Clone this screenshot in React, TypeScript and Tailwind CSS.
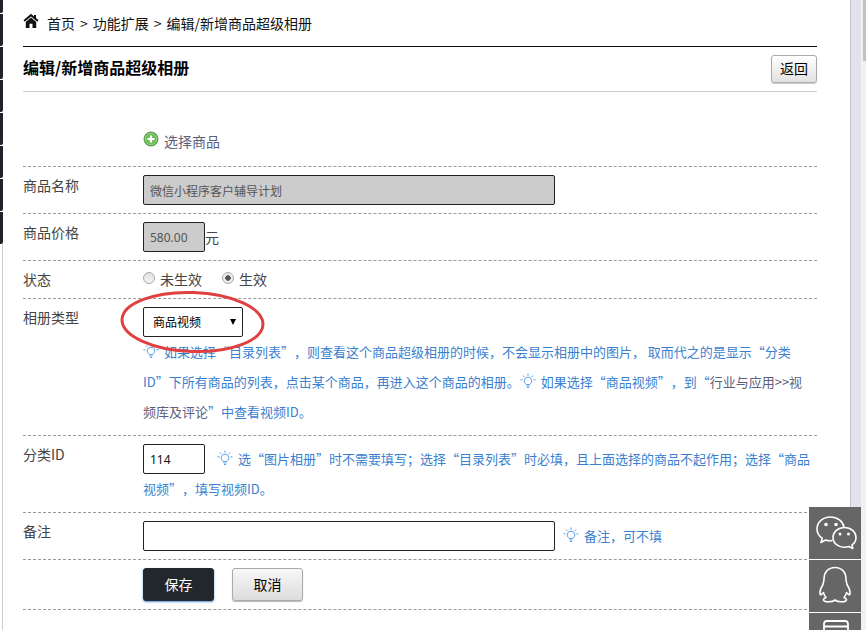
import React from 'react';

const inputClass = 'h-[30px] rounded-[2px] border border-[#222] px-1.5 text-xs';

const Bulb = () => (
  <svg viewBox="0 0 16 16" className="mr-0.5 inline-block w-4 h-4 align-[-2px]" fill="none" stroke="#62a5ea" strokeWidth="1" strokeLinecap="round">
    <path d="M6.300 11.300C5 10.500 4.200 9.400 4.200 8a3.800 3.800 0 0 1 7.600 0c0 1.400-.8 2.500-2.100 3.300" />
    <path d="M6.300 11.500h3.400M6.800 13h2.400M7.300 14.500h1.400" />
    <path d="M8 .8v1.700M3.200 2.800l1 1M12.800 2.800l-1 1M.8 6.800h1.400M13.800 6.800h1.400" />
  </svg>
);

const Home = () => (
  <svg viewBox="0 0 16 16" className="mb-1 w-4 h-4" fill="#111">
    <path d="M8 .8.5 7.300l1.200 1.500L8 3.400l6.300 5.400 1.200-1.500-2.500-2.200V2h-2v1.500z" />
    <path d="M8 4.600 2.800 9V15h3.700V10.700h3V15h3.700V9z" />
  </svg>
);

const AddIcon = () => (
  <svg viewBox="0 0 16 16" className="mb-1 w-4 h-4">
    <circle cx="8" cy="8" r="7" fill="#4fa63d" stroke="#3f8a35" strokeWidth=".8" />
    <circle cx="8" cy="8" r="5.800" fill="#6fbd58" stroke="#a9dc98" strokeWidth=".8" />
    <path d="M8 4.500v7M4.500 8h7" stroke="#fff" strokeWidth="2.200" />
  </svg>
);

type RowProps = {
  label?: React.ReactNode;
  children: React.ReactNode;
};

const Row = ({ label, children }: RowProps) => (
  <div className="flex border-b border-dashed border-[#999] py-2">
    <div className="w-[120px] shrink-0 text-sm leading-5">{label}</div>
    <div className="min-w-0 flex-1">{children}</div>
  </div>
);

const hintClass = 'text-[13px] leading-[30px] text-[#3a7fd0]';

const radioClass =
  'appearance-none mb-1 w-3 h-3 rounded-full border border-[#aaa] bg-gradient-to-b from-[#e0e0e0] to-[#f4f4f4] checked:bg-[radial-gradient(circle,#555_0_2.5px,#eee_3px)]';

const App = () => {
  return (
    <div
      lang="zh-CN"
      className="flex min-h-screen bg-white font-['Noto_Sans_CJK_SC','Noto_Sans',sans-serif] text-[#444] [text-spacing-trim:space-all]"
    >
      <aside className="w-[3px] shrink-0 flex flex-col">
        <div className="h-[13px] rounded-br-[2px] bg-[#22222a]" />
        {[0, 1, 2, 3, 4, 5, 6].map((item) => (
          <div key={item} className="mt-px h-8 rounded-br-[2px] bg-[#22222a]" />
        ))}
        <div className="flex-1 border-r border-[#ccc]" />
      </aside>

      <main className="min-w-0 flex-1 pl-5 pr-[33px]">
        <nav className="flex h-[47px] items-center gap-2 border-b border-[#111] text-sm text-[#111]">
          <Home />
          <ol className="flex gap-[5px]">
            <li><a href="#home">首页</a></li>
            <li>&gt;</li>
            <li><a href="#extend">功能扩展</a></li>
            <li>&gt;</li>
            <li>编辑/新增商品超级相册</li>
          </ol>
        </nav>

        <header className="flex h-[45px] items-center justify-between border-b border-[#ccc]">
          <h1 className="pb-1 text-base font-bold text-black">编辑/新增商品超级相册</h1>
          <button className="h-7 w-[46px] rounded-[3px] border border-[#aaa] bg-gradient-to-b from-white to-[#e2e2e2] pb-0.5 text-sm text-black shadow-[0_1px_1px_#ccc]">
            返回
          </button>
        </header>

        <form>
          <div className="pt-7">
            <Row>
              <a href="#select" className="mb-1 flex h-[26px] items-center gap-[5px] text-sm text-[#5b607c]">
                <AddIcon />
                选择商品
              </a>
            </Row>
          </div>

          <Row label={<label htmlFor="name">商品名称</label>}>
            <input id="name" readOnly defaultValue="微信小程序客户辅导计划" className={`${inputClass} block w-[412px] bg-[#ccc] text-[#555]`} />
          </Row>

          <Row label={<label htmlFor="price">商品价格</label>}>
            <div className="flex items-center text-sm">
              <input id="price" readOnly defaultValue="580.00" className={`${inputClass} w-[62px] bg-[#ccc] font-['Noto_Sans'] text-[#555]`} />
              元
            </div>
          </Row>

          <Row label="状态">
            <div className="flex gap-5 text-sm leading-[21px]">
              <label className="flex items-center gap-[5px]">
                <input type="radio" name="status" className={radioClass} />
                未生效
              </label>
              <label className="flex items-center gap-[5px]">
                <input type="radio" name="status" defaultChecked className={radioClass} />
                生效
              </label>
            </div>
          </Row>

          <Row label={<label htmlFor="type">相册类型</label>}>
            <div className="relative w-[100px]">
              <select id="type" className="block h-[30px] w-full appearance-none rounded-[2px] border border-[#222] bg-white pl-[9px] text-xs text-black">
                <option>商品视频</option>
                <option>图片相册</option>
                <option>目录列表</option>
              </select>
              <svg viewBox="0 0 6 6" className="pointer-events-none absolute right-[7px] top-3 h-1.5 w-1.5">
                <path d="M0 0h6L3 6z" />
              </svg>
              <svg viewBox="0 0 146 66" className="pointer-events-none absolute -left-6 -top-[18px] h-[66px] w-[146px]" fill="none">
                <ellipse cx="73.500" cy="33" rx="70.500" ry="29.500" stroke="#e04040" strokeWidth="3" transform="rotate(2 73 33)" />
              </svg>
            </div>
            <p className={hintClass}>
              <Bulb /> 如果选择“目录列表”，则查看这个商品超级相册的时候，不会显示相册中的图片， 取而代之的是显示“分类
              <br />
              ID”下所有商品的列表，点击某个商品，再进入这个商品的相册。
              <Bulb /> 如果选择“商品视频”，到“
              <a href="#video" className="text-[#5b607c]">行业与应用&gt;&gt;视<br />频库及评论</a>”中查看视频ID。
            </p>
          </Row>

          <Row label={<label htmlFor="category">分类ID</label>}>
            <div className={hintClass}>
              <input id="category" defaultValue="114" className={`${inputClass} mr-3 w-[62px] align-top font-['Noto_Sans'] text-[#111]`} />
              <Bulb /> 选“图片相册”时不需要填写；选择“目录列表”时必填，且上面选择的商品不起作用；选择“商品
              <br />
              视频”，填写视频ID。
            </div>
          </Row>

          <Row label={<label htmlFor="remark">备注</label>}>
            <div className={hintClass}>
              <input id="remark" className={`${inputClass} mr-2 w-[412px] align-top text-[#111]`} />
              <Bulb /> 备注，可不填
            </div>
          </Row>

          <Row>
            <div className="flex gap-[18px] text-sm">
              <button type="button" className="h-[33px] w-[71px] rounded-[3px] border border-[#222930] bg-[#22272c] pb-0.5 text-white shadow-[0_1px_2px_#4a90d0]">
                保存
              </button>
              <button type="button" className="h-[33px] w-[71px] rounded-[3px] border border-[#aaa] bg-gradient-to-b from-[#f8f8f8] to-[#dcdcdc] pb-0.5 text-black shadow-[0_1px_1px_#bbb]">
                取消
              </button>
            </div>
          </Row>
        </form>
      </main>

      <div className="w-[11px] shrink-0 border-l border-[#c4c4cc] bg-[#e2e2ea]" />
      <div className="w-[5px] shrink-0 bg-[#f1f1f1] pl-0.5">
        <div className="h-[61px] bg-[#c1c1c1]" />
      </div>

      <div className="fixed right-[5px] top-[507px] flex flex-col gap-px bg-white">
        <button aria-label="微信" className="h-[52px] w-[52px] bg-[#666]">
          <svg viewBox="0 0 52 52" fill="none" stroke="#fff" strokeWidth="1.600" strokeLinejoin="round">
            <path d="M23.500 33.500c-2.500.5-5 .3-7-.5L12 35.500l1.200-4.300C10 29 8 25.500 8 22c0-7 6-12 13.500-12C28.500 10 34 14.300 35 20" />
            <path d="M35.500 20.500c6.500 0 11.500 4.500 11.500 10 0 3.200-1.500 5.800-4 7.500l.8 3.500-4-2c-7.500 2.300-15.800-1.700-15.800-9 0-5.500 5-10 11.500-10z" />
            <g fill="#fff" stroke="none">
              <circle cx="17" cy="17.500" r="1.800" />
              <circle cx="27" cy="17.500" r="1.800" />
              <circle cx="31" cy="27" r="1.500" />
              <circle cx="39.500" cy="27" r="1.500" />
            </g>
          </svg>
        </button>
        <button aria-label="QQ" className="h-[52px] w-[52px] bg-[#666]">
          <svg viewBox="0 0 52 52" fill="none" stroke="#fff" strokeWidth="1.600" strokeLinejoin="round">
            <path d="M26 7.500c-7 0-11 5-11 11.500 0 2-.7 3.500-1 5.500-1.500 2.500-3.500 6-3 9.500.4 1.500 2 .2 3.500-1.500.3 2 1.200 3.500 2.500 5-2 .8-3 2-2.300 3 1.500 2 8.500 1.700 11.300-.5 2.800 2.200 9.800 2.500 11.300.5.7-1-.3-2.200-2.300-3 1.300-1.500 2.200-3 2.500-5 1.500 1.700 3.100 3 3.500 1.500.5-3.500-1.500-7-3-9.500-.3-2-1-3.500-1-5.500C37 12.500 33 7.500 26 7.500z" />
          </svg>
        </button>
        <button aria-label="手机" className="h-[52px] w-[52px] bg-[#666]">
          <svg viewBox="0 0 52 52" fill="none" stroke="#fff" strokeWidth="1.800">
            <rect x="15" y="8" width="24" height="36" rx="3" />
            <path d="M15 13.500h24M15 38h24" />
          </svg>
        </button>
      </div>
    </div>
  );
};

export default App;
